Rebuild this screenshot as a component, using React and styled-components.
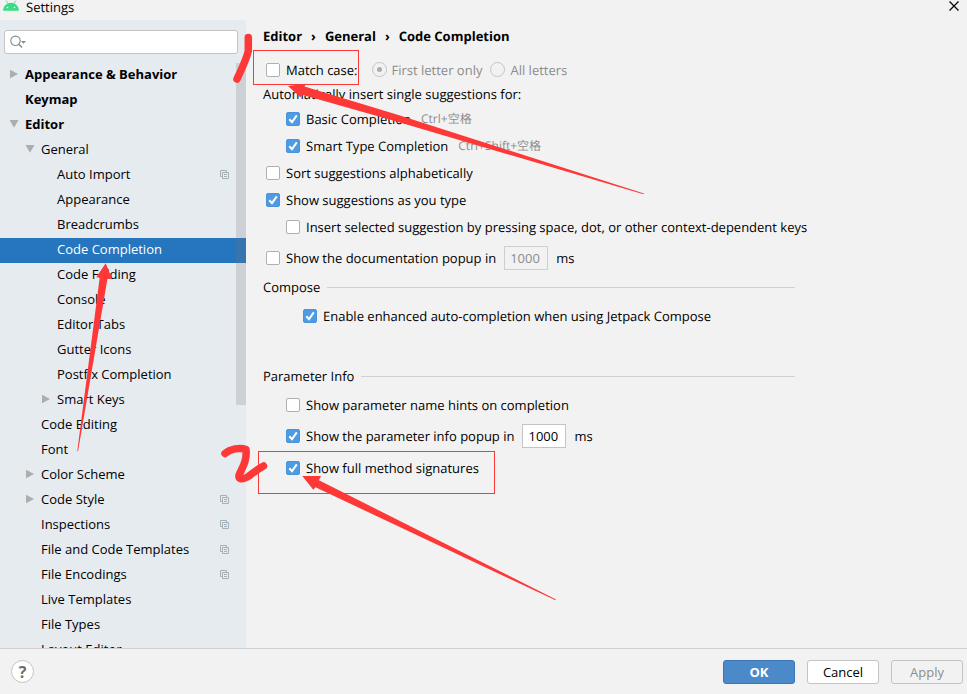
import React, { useState } from "react"
import styled, { createGlobalStyle } from "styled-components"

const vars = {
  window: "#f2f2f2",
  sidebar: "#e6ebf0",
  selection: "#2675bf",
  accent: "#4d9be3",
  border: "#c4c4c4",
  line: "#d1d1d1",
  grey: "#8c8c8c",
  mark: "#fd3837",
}

const GlobalStyle = createGlobalStyle`
  * {
    box-sizing: border-box;
  }

  body {
    margin: 0;
    background: ${vars.window};
    text-rendering: geometricPrecision;
  }

  body, button, input {
    color: #000;
    font-family: "Open Sans", "Noto Sans CJK SC", sans-serif;
    font-size: 13px;
    line-height: 20px;
  }
`

const Window = styled.div`
  position: relative;
  display: flex;
  flex-direction: column;
  height: 100vh;
  overflow: hidden;
`

const TitleBar = styled.header`
  display: flex;
  align-items: flex-start;
  flex: none;
  height: 20px;
  padding: 0 8px 0 3px;
  line-height: 14px;
`

const TitleText = styled.span`
  flex: 1;
  margin-left: 7px;
`

const CloseButton = styled.button`
  display: flex;
  padding: 1px 0;
  border: 0;
  background: none;
`

const Body = styled.div`
  display: flex;
  flex: 1;
  min-height: 0;
`

const Sidebar = styled.aside`
  display: flex;
  flex-direction: column;
  flex: none;
  width: 246px;
  background: ${vars.sidebar};
`

const SearchBox = styled.label`
  display: flex;
  align-items: center;
  flex: none;
  height: 24px;
  margin: 10px 8px 9px 4px;
  padding: 0 5px;
  border: 1px solid ${vars.border};
  border-radius: 3px;
  background: #fff;
`

const SearchInput = styled.input`
  flex: 1;
  min-width: 0;
  border: 0;
  outline: 0;
  background: none;
`

const TreeArea = styled.nav`
  position: relative;
  flex: 1;
  min-height: 0;
  overflow: hidden;
`

const Tree = styled.ul`
  margin: 0;
  padding: 0;
  list-style: none;
`

const TreeRow = styled.button`
  display: flex;
  align-items: center;
  width: 100%;
  height: 25px;
  padding: 0 17px 3px ${({ $level }) => 9 + $level * 16}px;
  border: 0;
  background: ${({ $selected }) => ($selected ? vars.selection : "none")};
  color: ${({ $selected }) => ($selected ? "#fff" : "#000")};
  font-weight: ${({ $bold }) => ($bold ? "bold" : "normal")};
  text-align: left;
  white-space: nowrap;
`

const Twisty = styled.span`
  display: flex;
  flex: none;
  width: 16px;
`

const TreeLabel = styled.span`
  flex: 1;
`

const ScrollThumb = styled.div`
  position: absolute;
  top: 0;
  right: 0;
  width: 10px;
  height: 342px;
  background: rgba(120, 120, 120, 0.22);
`

const Content = styled.main`
  flex: 1;
  min-width: 0;
  padding: 6px 17px 0;
`

const Breadcrumb = styled.nav`
  display: flex;
  gap: 9px;
  margin-bottom: 10px;
  font-weight: bold;
`

const Options = styled.form`
  max-width: 532px;
`

const Row = styled.div`
  display: flex;
  align-items: center;
  gap: 8px;
  height: ${({ $tall }) => ($tall ? 36 : 27)}px;
  padding-left: ${({ $indent }) => $indent || 3}px;
  white-space: nowrap;
`

const Note = styled.p`
  margin: 0;
  line-height: 22px;
`

const GroupTitle = styled.h2`
  display: flex;
  align-items: center;
  gap: 7px;
  margin: ${({ $spaced }) => ($spaced ? 36 : 0)}px 0 4px;
  font-size: 13px;
  font-weight: normal;
  line-height: 22px;

  &::after {
    content: "";
    flex: 1;
    border-top: 1px solid ${vars.line};
  }
`

const CheckLabel = styled.label`
  display: flex;
  align-items: center;
  gap: 6px;
`

const CheckStack = styled.span`
  display: grid;

  > * {
    grid-area: 1 / 1;
  }

  svg {
    pointer-events: none;
  }
`

const CheckInput = styled.input`
  appearance: none;
  width: 14px;
  height: 14px;
  margin: 0;
  border: 1px solid #b0b0b0;
  border-radius: 2px;
  background: #fff;

  &:checked {
    border-color: #4a93d8;
    background: ${vars.accent};
  }

  &:not(:checked) + svg {
    visibility: hidden;
  }
`

const RadioLabel = styled.label`
  display: flex;
  align-items: center;
  gap: 5px;
  margin-left: ${({ $first }) => ($first ? 6 : 0)}px;
  color: ${vars.grey};
`

const RadioInput = styled.input`
  appearance: none;
  display: grid;
  place-items: center;
  width: 15px;
  height: 15px;
  margin: 0;
  border: 1px solid ${vars.border};
  border-radius: 50%;

  &:checked::after {
    content: "";
    width: 5px;
    height: 5px;
    border-radius: 50%;
    background: #ababab;
  }
`

const Shortcut = styled.span`
  margin-left: 2px;
  color: ${vars.grey};
  font-size: 12px;
`

const DelayInput = styled.input`
  width: 44px;
  height: 24px;
  padding: 0 5px;
  border: 1px solid ${vars.border};
  background: #fff;

  &:disabled {
    border-color: #cfcfcf;
    background: ${vars.window};
    color: ${vars.grey};
  }
`

const Footer = styled.footer`
  display: flex;
  align-items: center;
  flex: none;
  gap: 12px;
  height: 46px;
  padding: 0 4px 0 11px;
  border-top: 1px solid ${vars.line};
`

const HelpButton = styled.button`
  width: 23px;
  height: 23px;
  margin-right: auto;
  padding: 0;
  border: 1px solid ${vars.border};
  border-radius: 50%;
  background: #fff;
  color: #6e6e6e;
  font-size: 16px;
  font-weight: bold;
`

const DialogButton = styled.button`
  width: 72px;
  height: 24px;
  padding: 0;
  border: 1px solid ${({ $primary }) => ($primary ? "#3b76b4" : vars.border)};
  border-radius: 3px;
  background: ${({ $primary }) => ($primary ? "#4c89c8" : "#fff")};
  color: ${({ $primary }) => ($primary ? "#fff" : "#000")};
  font-weight: ${({ $primary }) => ($primary ? "bold" : "normal")};

  &:disabled {
    background: ${vars.window};
    color: ${vars.grey};
  }
`

const Markup = styled.svg`
  position: absolute;
  top: 0;
  left: 0;
  pointer-events: none;
`

const AndroidIcon = () => (
  <svg width="16" height="11" viewBox="0 0 16 11" aria-hidden="true">
    <path d="M4.700 3.200L3.200.7M11.300 3.200L12.800.7" fill="none" stroke="#3ddc84" strokeWidth=".8" />
    <path d="M0 10.700C.4 5.800 3.700 2.700 8 2.700s7.600 3.100 8 8z" fill="#3ddc84" />
    <circle cx="4.500" cy="7.500" r=".8" fill="#fff" />
    <circle cx="11.500" cy="7.500" r=".8" fill="#fff" />
  </svg>
)

const CloseIcon = () => (
  <svg width="10" height="10" viewBox="0 0 10 10">
    <path d="M.5.5l9 9M9.500.5l-9 9" stroke="#000" strokeWidth="1.200" />
  </svg>
)

const SearchIcon = () => (
  <svg width="17" height="14" viewBox="0 0 17 14">
    <circle cx="5.500" cy="5.800" r="4.700" fill="none" stroke="#7f8b91" strokeWidth="1.100" />
    <path d="M8.800 9.200l3.200 3.300" stroke="#7f8b91" strokeWidth="1.500" />
    <path d="M11 6h5l-2.500 2.800z" fill="#7f8b91" />
  </svg>
)

const Triangle = ({ open }) => (
  <svg width="10" height="10" viewBox="0 0 10 10">
    <path d={open ? "M.5 1h9L5 8.800z" : "M1 .8v8.400L9 5z"} fill="#adadad" />
  </svg>
)

const ProjectIcon = () => (
  <svg width="9" height="9" viewBox="0 0 9 9" fill="none" stroke="#a4b0b9">
    <path d="M2.500 6.500h-2v-6h6v2M2.500 2.500h6v6h-6zM4 4.500h3M4 6.500h3" />
  </svg>
)

const CheckMark = () => (
  <svg width="14" height="14" viewBox="0 0 14 14">
    <path d="M3.300 7.200l2.700 2.900 4.800-6.700" fill="none" stroke="#fff" strokeWidth="2" />
  </svg>
)

const Checkbox = ({ children, checked }) => {
  const [on, setOn] = useState(Boolean(checked))

  return (
    <CheckLabel>
      <CheckStack>
        <CheckInput type="checkbox" checked={on} onChange={() => setOn(!on)} />
        <CheckMark />
      </CheckStack>
      {children}
    </CheckLabel>
  )
}

const items = [
  { label: "Appearance & Behavior", level: 0, arrow: "closed", bold: true },
  { label: "Keymap", level: 0, bold: true },
  { label: "Editor", level: 0, arrow: "open", bold: true },
  { label: "General", level: 1, arrow: "open" },
  { label: "Auto Import", level: 2, project: true },
  { label: "Appearance", level: 2 },
  { label: "Breadcrumbs", level: 2 },
  { label: "Code Completion", level: 2 },
  { label: "Code Folding", level: 2 },
  { label: "Console", level: 2 },
  { label: "Editor Tabs", level: 2 },
  { label: "Gutter Icons", level: 2 },
  { label: "Postfix Completion", level: 2 },
  { label: "Smart Keys", level: 2, arrow: "closed" },
  { label: "Code Editing", level: 1 },
  { label: "Font", level: 1 },
  { label: "Color Scheme", level: 1, arrow: "closed" },
  { label: "Code Style", level: 1, arrow: "closed", project: true },
  { label: "Inspections", level: 1, project: true },
  { label: "File and Code Templates", level: 1, project: true },
  { label: "File Encodings", level: 1, project: true },
  { label: "Live Templates", level: 1 },
  { label: "File Types", level: 1 },
  { label: "Layout Editor", level: 1 },
]

const SettingsTree = () => {
  const [selected, setSelected] = useState("Code Completion")

  return (
    <TreeArea aria-label="Settings pages">
      <Tree>
        {items.map(({ label, level, arrow, bold, project }) => (
          <li key={label}>
            <TreeRow
              type="button"
              $level={level}
              $bold={bold}
              $selected={label === selected}
              onClick={() => setSelected(label)}
            >
              <Twisty>{arrow && <Triangle open={arrow === "open"} />}</Twisty>
              <TreeLabel>{label}</TreeLabel>
              {project && <ProjectIcon />}
            </TreeRow>
          </li>
        ))}
      </Tree>
      <ScrollThumb />
    </TreeArea>
  )
}

const Annotations = () => (
  <Markup width="967" height="694" viewBox="0 0 967 694" aria-hidden="true">
    <g fill="none" stroke={vars.mark}>
      <rect x="253.500" y="50.500" width="105" height="34" />
      <rect x="258.500" y="451.500" width="236" height="42" />
      <g strokeWidth="7.500" strokeLinecap="round" strokeLinejoin="round">
        <path d="M248.300 37.500V51C246 61 241 70 237 79" />
        <path d="M225 453.500C230 449 240 447 246 449.500C247 459 244 465 239.500 474C237 480 243 480 249 476C254 472 258 469 263.500 466" />
      </g>
    </g>
    <g fill={vars.mark}>
      <path d="M288 86L306 83.700L304.500 86.500L400 115.500L644 193.500L643.500 194.300L400 122.500L303 95L300.300 97.300z" />
      <path d="M105.700 263.300L112.300 279.300L107.500 278.500L78 451.500L77.300 451L99.700 277.500L96.300 277.300z" />
      <path d="M302.300 476H321L319 480.300L556 599.500L555.500 600.300L315.500 487.300L313.300 489.700z" />
    </g>
  </Markup>
)

const App = () => (
  <Window>
    <GlobalStyle />
    <TitleBar>
      <AndroidIcon />
      <TitleText>Settings</TitleText>
      <CloseButton type="button" aria-label="Close">
        <CloseIcon />
      </CloseButton>
    </TitleBar>
    <Body>
      <Sidebar>
        <SearchBox>
          <SearchIcon />
          <SearchInput type="text" aria-label="Search settings" />
        </SearchBox>
        <SettingsTree />
      </Sidebar>
      <Content>
        <Breadcrumb aria-label="Breadcrumb">
          <span>Editor</span>
          <span>›</span>
          <span>General</span>
          <span>›</span>
          <span>Code Completion</span>
        </Breadcrumb>
        <Options>
          <Row>
            <Checkbox>Match case:</Checkbox>
            <RadioLabel $first>
              <RadioInput type="radio" name="case" defaultChecked disabled />
              First letter only
            </RadioLabel>
            <RadioLabel>
              <RadioInput type="radio" name="case" disabled />
              All letters
            </RadioLabel>
          </Row>
          <Note>Automatically insert single suggestions for:</Note>
          <Row $indent={23}>
            <Checkbox checked>Basic Completion</Checkbox>
            <Shortcut>Ctrl+空格</Shortcut>
          </Row>
          <Row $indent={23}>
            <Checkbox checked>Smart Type Completion</Checkbox>
            <Shortcut>Ctrl+Shift+空格</Shortcut>
          </Row>
          <Row>
            <Checkbox>Sort suggestions alphabetically</Checkbox>
          </Row>
          <Row>
            <Checkbox checked>Show suggestions as you type</Checkbox>
          </Row>
          <Row $indent={23}>
            <Checkbox>Insert selected suggestion by pressing space, dot, or other context-dependent keys</Checkbox>
          </Row>
          <Row $tall>
            <Checkbox>Show the documentation popup in</Checkbox>
            <DelayInput type="text" defaultValue="1000" aria-label="Documentation popup delay" disabled />
            <span>ms</span>
          </Row>
          <GroupTitle>Compose</GroupTitle>
          <Row $indent={40}>
            <Checkbox checked>Enable enhanced auto-completion when using Jetpack Compose</Checkbox>
          </Row>
          <GroupTitle $spaced>Parameter Info</GroupTitle>
          <Row $indent={23}>
            <Checkbox>Show parameter name hints on completion</Checkbox>
          </Row>
          <Row $indent={23} $tall>
            <Checkbox checked>Show the parameter info popup in</Checkbox>
            <DelayInput type="text" defaultValue="1000" aria-label="Parameter info popup delay" />
            <span>ms</span>
          </Row>
          <Row $indent={23}>
            <Checkbox checked>Show full method signatures</Checkbox>
          </Row>
        </Options>
      </Content>
    </Body>
    <Footer>
      <HelpButton type="button" aria-label="Help">?</HelpButton>
      <DialogButton type="button" $primary>OK</DialogButton>
      <DialogButton type="button">Cancel</DialogButton>
      <DialogButton type="button" disabled>Apply</DialogButton>
    </Footer>
    <Annotations />
  </Window>
)

export default App
